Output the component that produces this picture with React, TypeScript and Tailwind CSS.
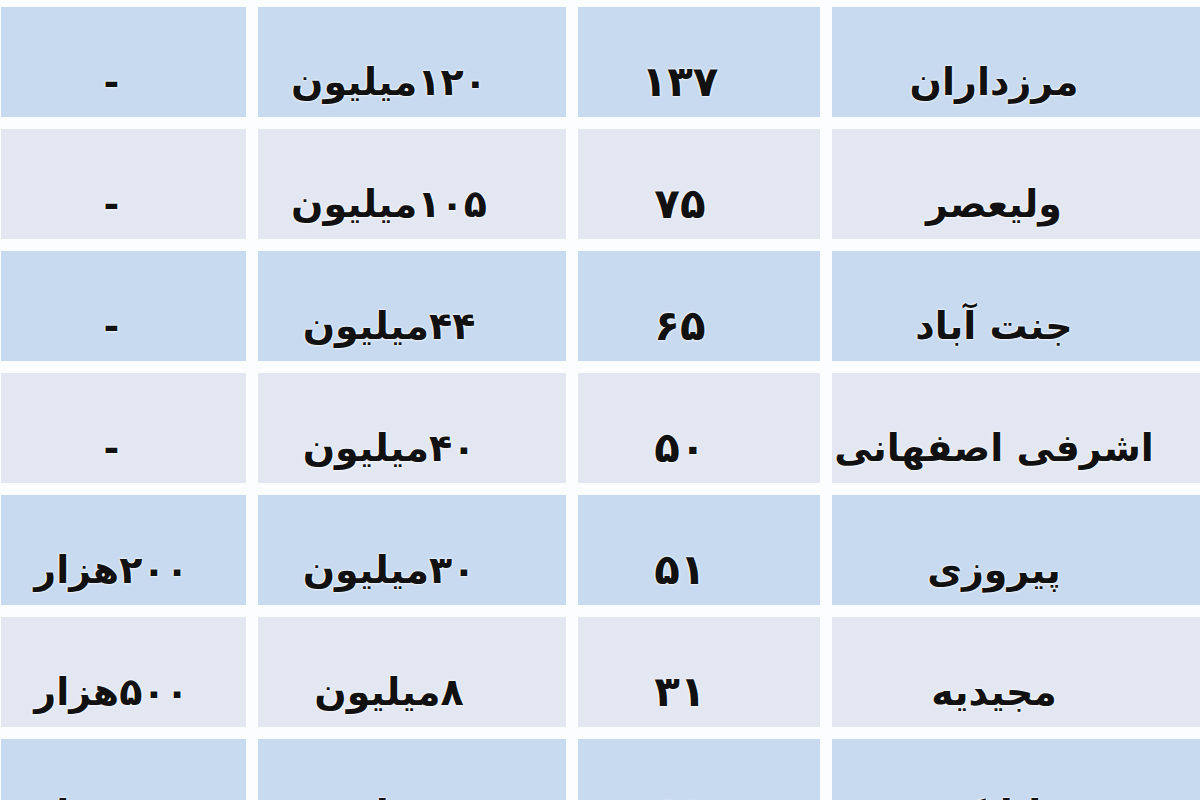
const rows = [
  ['مرزداران', '۱۳۷', '۱۲۰میلیون', '-'],
  ['ولیعصر', '۷۵', '۱۰۵میلیون', '-'],
  ['جنت آباد', '۶۵', '۴۴میلیون', '-'],
  ['اشرفی اصفهانی', '۵۰', '۴۰میلیون', '-'],
  ['پیروزی', '۵۱', '۳۰میلیون', '۲۰۰هزار'],
  ['مجیدیه', '۳۱', '۸میلیون', '۵۰۰هزار'],
  ['اتابک', '۶۸', '۳۰میلیون', '۵۰۰هزار'],
]

// columns from right to left (rtl)
const cols = [
  'w-[368px] pr-[44px] text-[38px]',
  'w-[242px] pr-[38px] text-[42px]',
  'w-[308px] pr-[46px] text-[38px]',
  'w-[245px] pr-[24px] text-[38px]',
]

export default function App() {
  return (
    <div
      dir="rtl"
      className="w-[1200px] h-[800px] overflow-hidden bg-[#fbfdff] pt-[7px] flex flex-col gap-[12px]"
      style={{ fontFamily: '"DejaVu Sans", "Noto Sans", sans-serif' }}
    >
      {rows.map((row, i) => (
        <div key={i} className="flex gap-[12px] h-[110px] shrink-0">
          {row.map((cell, j) => (
            <div
              key={j}
              className={`${cols[j]} shrink-0 flex items-center justify-center pt-[40px] ${
                i % 2 === 0 ? 'bg-[#c7daf0]' : 'bg-[#e2e7f2]'
              }`}
            >
              <span className="font-bold leading-none text-[#111] [text-shadow:0_0_3px_#fff,0_0_2px_#fff]">
                {cell}
              </span>
            </div>
          ))}
        </div>
      ))}
    </div>
  )
}
